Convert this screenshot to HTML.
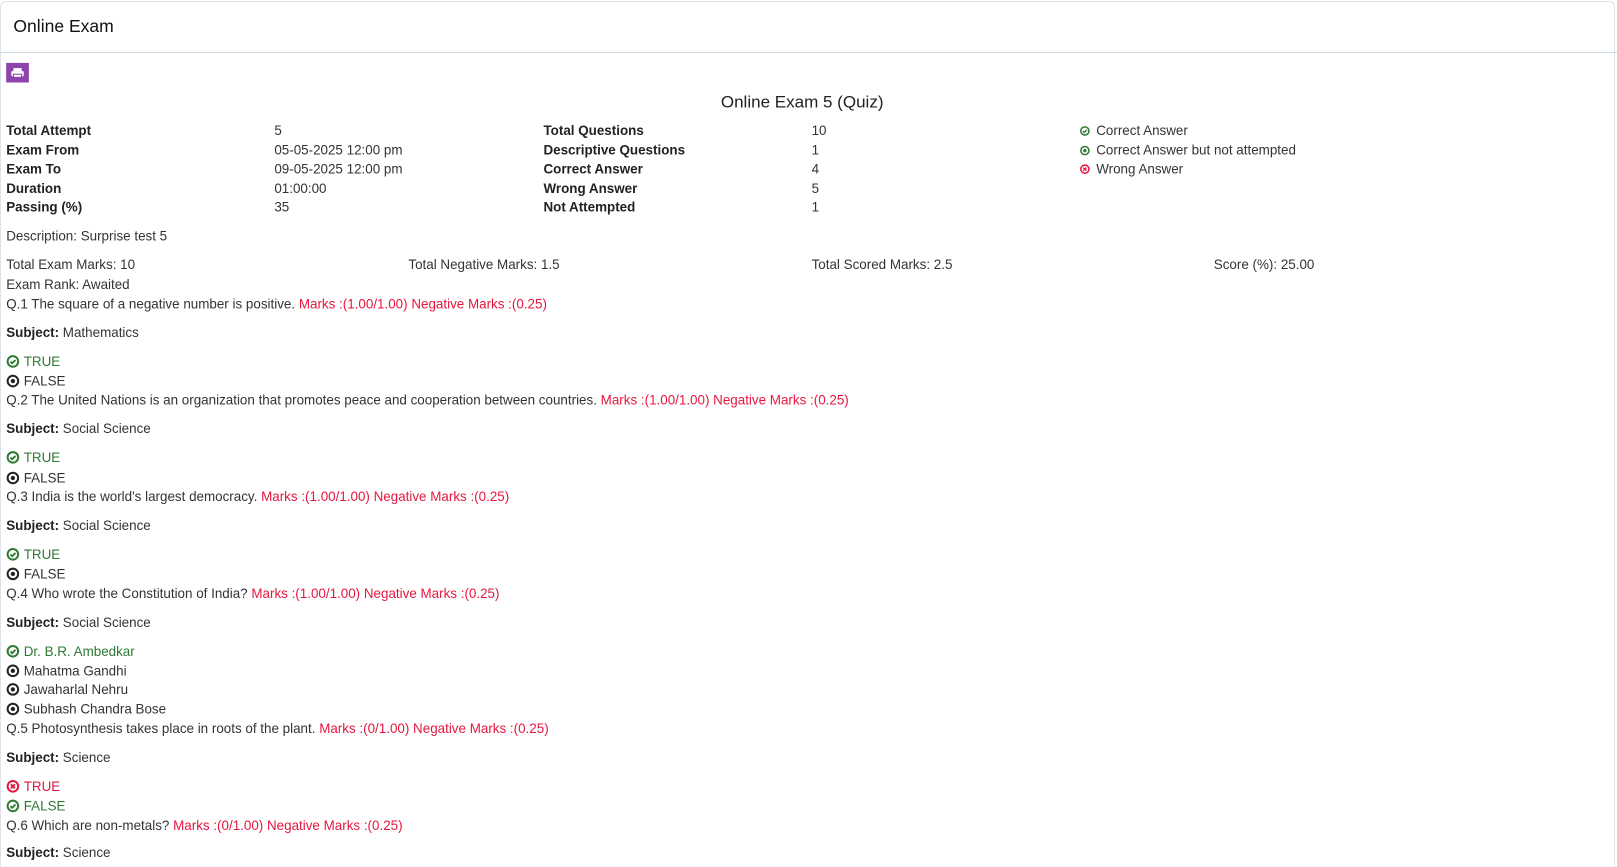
<!DOCTYPE html>
<html style="overflow:hidden;height:867px"><head><meta charset="utf-8"><style>
body{margin:0;width:1617px;height:867px;background:#fff;font-family:"Liberation Sans",sans-serif;font-size:13px;color:#333;position:relative;overflow:hidden}
.card{position:absolute;left:0;top:1px;width:1615px;height:866px;border:1px solid #dde3ea;border-bottom:none;border-radius:6px 6px 0 0;box-sizing:border-box}
.hdr{position:absolute;left:0;top:52px;width:1617px;height:1px;background:#cfd8e2}
.wrap{position:absolute;left:0;top:0;width:1560px;height:840px;transform:scale(1.03125);transform-origin:0 0}
.t{position:absolute;line-height:18px;white-space:nowrap}
b{font-weight:bold;color:#222}
.r{color:#e5173f}.g{color:#2f7a34}
.ic{display:inline-block;width:13px;height:13px;vertical-align:-2px;margin-right:4px}
.ls{width:10px;height:10px;margin-right:6px;vertical-align:-1px}
</style></head><body>
<div class="card"></div>
<div class="hdr"></div>
<div class="wrap">
<div class="t" style="left:13px;top:15px;font-size:17px;line-height:22px;color:#111">Online Exam</div>
<div style="position:absolute;left:6px;top:61px;width:22px;height:19px;background:#8e44ad"><svg width="22" height="19" viewBox="0 0 22 19"><rect x="7" y="5" width="8" height="3" fill="#fff"/><rect x="5" y="8" width="12" height="5" rx="1" fill="#fff"/><rect x="7" y="11" width="8" height="3" fill="#fff" stroke="#8e44ad" stroke-width="1"/></svg></div>
<div class="t" style="left:699px;top:88px;font-size:16.5px;line-height:22px;color:#222">Online Exam 5 (Quiz)</div>

<div class="t" style="left:6px;top:118px"><b>Total Attempt</b></div><div class="t" style="left:266px;top:118px">5</div>
<div class="t" style="left:6px;top:137px"><b>Exam From</b></div><div class="t" style="left:266px;top:137px">05-05-2025 12:00 pm</div>
<div class="t" style="left:6px;top:155px"><b>Exam To</b></div><div class="t" style="left:266px;top:155px">09-05-2025 12:00 pm</div>
<div class="t" style="left:6px;top:174px"><b>Duration</b></div><div class="t" style="left:266px;top:174px">01:00:00</div>
<div class="t" style="left:6px;top:192px"><b>Passing (%)</b></div><div class="t" style="left:266px;top:192px">35</div>
<div class="t" style="left:527px;top:118px"><b>Total Questions</b></div><div class="t" style="left:787px;top:118px">10</div>
<div class="t" style="left:527px;top:137px"><b>Descriptive Questions</b></div><div class="t" style="left:787px;top:137px">1</div>
<div class="t" style="left:527px;top:155px"><b>Correct Answer</b></div><div class="t" style="left:787px;top:155px">4</div>
<div class="t" style="left:527px;top:174px"><b>Wrong Answer</b></div><div class="t" style="left:787px;top:174px">5</div>
<div class="t" style="left:527px;top:192px"><b>Not Attempted</b></div><div class="t" style="left:787px;top:192px">1</div>

<svg width="0" height="0" style="position:absolute"><defs>
<symbol id="ok" viewBox="0 0 16 16"><circle cx="8" cy="8" r="6.3" fill="none" stroke="#2f7a34" stroke-width="2.4"/><path d="M5 8.2l2.1 2.1 4-4" fill="none" stroke="#2f7a34" stroke-width="2.2"/></symbol>
<symbol id="dot" viewBox="0 0 16 16"><circle cx="8" cy="8" r="6.3" fill="none" stroke="#222" stroke-width="2.4"/><circle cx="8" cy="8" r="2.6" fill="#222"/></symbol>
<symbol id="gdot" viewBox="0 0 16 16"><circle cx="8" cy="8" r="6.3" fill="none" stroke="#2f7a34" stroke-width="2.4"/><circle cx="8" cy="8" r="2.6" fill="#2f7a34"/></symbol>
<symbol id="bad" viewBox="0 0 16 16"><circle cx="8" cy="8" r="6.3" fill="none" stroke="#e5173f" stroke-width="2.4"/><path d="M5.6 5.6l4.8 4.8M10.4 5.6l-4.8 4.8" stroke="#e5173f" stroke-width="2.2"/></symbol>
</defs></svg>

<div class="t" style="left:1047px;top:118px"><svg class="ic ls"><use href="#ok"/></svg>Correct Answer</div>
<div class="t" style="left:1047px;top:137px"><svg class="ic ls"><use href="#gdot"/></svg>Correct Answer but not attempted</div>
<div class="t" style="left:1047px;top:155px"><svg class="ic ls"><use href="#bad"/></svg>Wrong Answer</div>

<div class="t" style="left:6px;top:220px">Description: Surprise test 5</div>
<div class="t" style="left:6px;top:248px">Total Exam Marks: 10</div>
<div class="t" style="left:396px;top:248px">Total Negative Marks: 1.5</div>
<div class="t" style="left:787px;top:248px">Total Scored Marks: 2.5</div>
<div class="t" style="left:1177px;top:248px">Score (%): 25.00</div>
<div class="t" style="left:6px;top:267px">Exam Rank: Awaited</div>

<div class="t" style="left:6px;top:286px">Q.1 The square of a negative number is positive. <span class="r">Marks :(1.00/1.00) Negative Marks :(0.25)</span></div>
<div class="t" style="left:6px;top:314px"><b>Subject:</b> Mathematics</div>
<div class="t g" style="left:6px;top:342px"><svg class="ic"><use href="#ok"/></svg>TRUE</div>
<div class="t" style="left:6px;top:361px"><svg class="ic"><use href="#dot"/></svg>FALSE</div>

<div class="t" style="left:6px;top:379px">Q.2 The United Nations is an organization that promotes peace and cooperation between countries. <span class="r">Marks :(1.00/1.00) Negative Marks :(0.25)</span></div>
<div class="t" style="left:6px;top:407px"><b>Subject:</b> Social Science</div>
<div class="t g" style="left:6px;top:435px"><svg class="ic"><use href="#ok"/></svg>TRUE</div>
<div class="t" style="left:6px;top:455px"><svg class="ic"><use href="#dot"/></svg>FALSE</div>

<div class="t" style="left:6px;top:473px">Q.3 India is the world's largest democracy. <span class="r">Marks :(1.00/1.00) Negative Marks :(0.25)</span></div>
<div class="t" style="left:6px;top:501px"><b>Subject:</b> Social Science</div>
<div class="t g" style="left:6px;top:529px"><svg class="ic"><use href="#ok"/></svg>TRUE</div>
<div class="t" style="left:6px;top:548px"><svg class="ic"><use href="#dot"/></svg>FALSE</div>

<div class="t" style="left:6px;top:567px">Q.4 Who wrote the Constitution of India? <span class="r">Marks :(1.00/1.00) Negative Marks :(0.25)</span></div>
<div class="t" style="left:6px;top:595px"><b>Subject:</b> Social Science</div>
<div class="t g" style="left:6px;top:623px"><svg class="ic"><use href="#ok"/></svg>Dr. B.R. Ambedkar</div>
<div class="t" style="left:6px;top:642px"><svg class="ic"><use href="#dot"/></svg>Mahatma Gandhi</div>
<div class="t" style="left:6px;top:660px"><svg class="ic"><use href="#dot"/></svg>Jawaharlal Nehru</div>
<div class="t" style="left:6px;top:679px"><svg class="ic"><use href="#dot"/></svg>Subhash Chandra Bose</div>

<div class="t" style="left:6px;top:698px">Q.5 Photosynthesis takes place in roots of the plant. <span class="r">Marks :(0/1.00) Negative Marks :(0.25)</span></div>
<div class="t" style="left:6px;top:726px"><b>Subject:</b> Science</div>
<div class="t r" style="left:6px;top:754px"><svg class="ic"><use href="#bad"/></svg>TRUE</div>
<div class="t g" style="left:6px;top:773px"><svg class="ic"><use href="#ok"/></svg>FALSE</div>

<div class="t" style="left:6px;top:792px">Q.6 Which are non-metals? <span class="r">Marks :(0/1.00) Negative Marks :(0.25)</span></div>
<div class="t" style="left:6px;top:818px"><b>Subject:</b> Science</div>
</div>
</body></html>
